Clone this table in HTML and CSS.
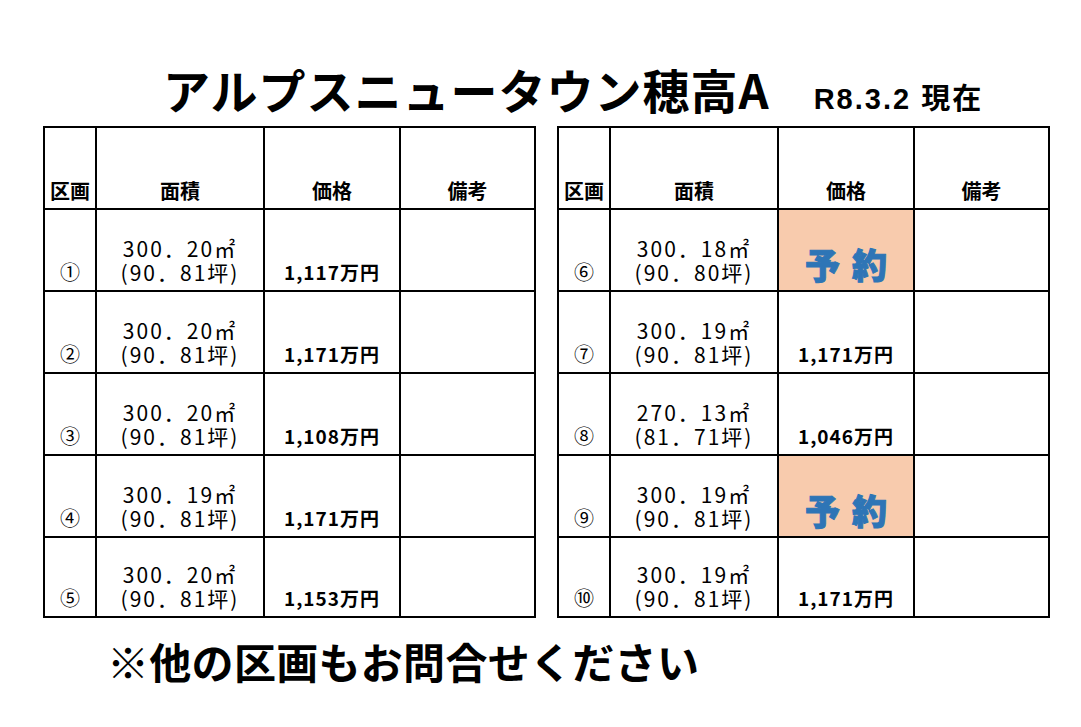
FILE: index.html
```html
<!DOCTYPE html>
<html lang="ja">
<head>
<meta charset="utf-8">
<title>アルプスニュータウン穂高A</title>
<link rel="stylesheet" href="styles.css">
</head>
<body>
<div class="page">
  <header class="head">
    <h1 class="title">アルプスニュータウン穂高A</h1>
    <div class="date">R8.3.2 現在</div>
  </header>
  <div class="tables">
    <table class="lots">
      <colgroup><col class="c-no"><col class="c-area"><col class="c-price"><col class="c-note"></colgroup>
      <tr class="hrow"><th>区画</th><th>面積</th><th>価格</th><th>備考</th></tr>
      <tr><td class="no">①</td><td class="area">300．20㎡<br>(90．81坪)</td><td class="price">1,117万円</td><td></td></tr>
      <tr><td class="no">②</td><td class="area">300．20㎡<br>(90．81坪)</td><td class="price">1,171万円</td><td></td></tr>
      <tr><td class="no">③</td><td class="area">300．20㎡<br>(90．81坪)</td><td class="price">1,108万円</td><td></td></tr>
      <tr><td class="no">④</td><td class="area">300．19㎡<br>(90．81坪)</td><td class="price">1,171万円</td><td></td></tr>
      <tr class="last"><td class="no">⑤</td><td class="area">300．20㎡<br>(90．81坪)</td><td class="price">1,153万円</td><td></td></tr>
    </table>
    <table class="lots">
      <colgroup><col class="c-no"><col class="c-area"><col class="c-price"><col class="c-note"></colgroup>
      <tr class="hrow"><th>区画</th><th>面積</th><th>価格</th><th>備考</th></tr>
      <tr><td class="no">⑥</td><td class="area">300．18㎡<br>(90．80坪)</td><td class="price reserved">予約</td><td></td></tr>
      <tr><td class="no">⑦</td><td class="area">300．19㎡<br>(90．81坪)</td><td class="price">1,171万円</td><td></td></tr>
      <tr><td class="no">⑧</td><td class="area">270．13㎡<br>(81．71坪)</td><td class="price">1,046万円</td><td></td></tr>
      <tr><td class="no">⑨</td><td class="area">300．19㎡<br>(90．81坪)</td><td class="price reserved">予約</td><td></td></tr>
      <tr class="last"><td class="no">⑩</td><td class="area">300．19㎡<br>(90．81坪)</td><td class="price">1,171万円</td><td></td></tr>
    </table>
  </div>
  <p class="note">※他の区画もお問合せください</p>
</div>
</body>
</html>
```
FILE: styles.css
```css
html, body {
  margin: 0;
  padding: 0;
  background: #fff;
}
body {
  font-family: "Noto Sans CJK JP", "Noto Sans", sans-serif;
  color: #000;
}
.page {
  width: 1081px;
  height: 727px;
  overflow: hidden;
  box-sizing: border-box;
  padding: 0 0 0 43px;
}
.head {
  display: flex;
  align-items: flex-end;
  height: 126px;
}
.title {
  margin: 0 0 14px 120px;
  font-size: 47px;
  font-weight: 700;
  line-height: 1;
  letter-spacing: 1px;
  white-space: nowrap;
}
.date {
  margin: 0 0 12px 44px;
  font-family: "Liberation Sans", "Noto Sans CJK JP", sans-serif;
  font-size: 29px;
  font-weight: 700;
  line-height: 1;
  letter-spacing: 2px;
  white-space: nowrap;
}
.tables {
  display: flex;
  gap: 21px;
}
.lots {
  border-collapse: collapse;
  table-layout: fixed;
  width: 493px;
}
.c-no { width: 52px; }
.c-area { width: 168px; }
.c-price { width: 136px; }
.c-note { width: 135px; }
.lots th, .lots td {
  border: 2px solid #000;
  height: 82px;
  padding: 0 0 6px;
  box-sizing: border-box;
  vertical-align: bottom;
  text-align: center;
  white-space: nowrap;
}
.lots th {
  font-size: 20px;
  font-weight: 700;
  line-height: 1;
  padding-bottom: 7px;
}
.lots tr.last td {
  height: 80px;
}
.no {
  font-size: 20px;
  line-height: 1;
  padding-bottom: 8px !important;
}
.area {
  font-size: 21px;
  line-height: 24px;
  letter-spacing: 2px;
}
.price {
  font-size: 19px;
  font-weight: 700;
  line-height: 1;
  letter-spacing: 1px;
  padding-bottom: 9px !important;
}
.price.reserved {
  background: #f8cbad;
  color: #2e75b6;
  font-size: 35px;
  font-weight: 900;
  -webkit-text-stroke: 1px #2e75b6;
  letter-spacing: 12px;
  text-indent: 12px;
  padding-bottom: 9px !important;
}
.note {
  margin: 22px 0 0 64px;
  font-size: 42px;
  font-weight: 700;
  line-height: 1;
  letter-spacing: 0.3px;
  white-space: nowrap;
}
```
